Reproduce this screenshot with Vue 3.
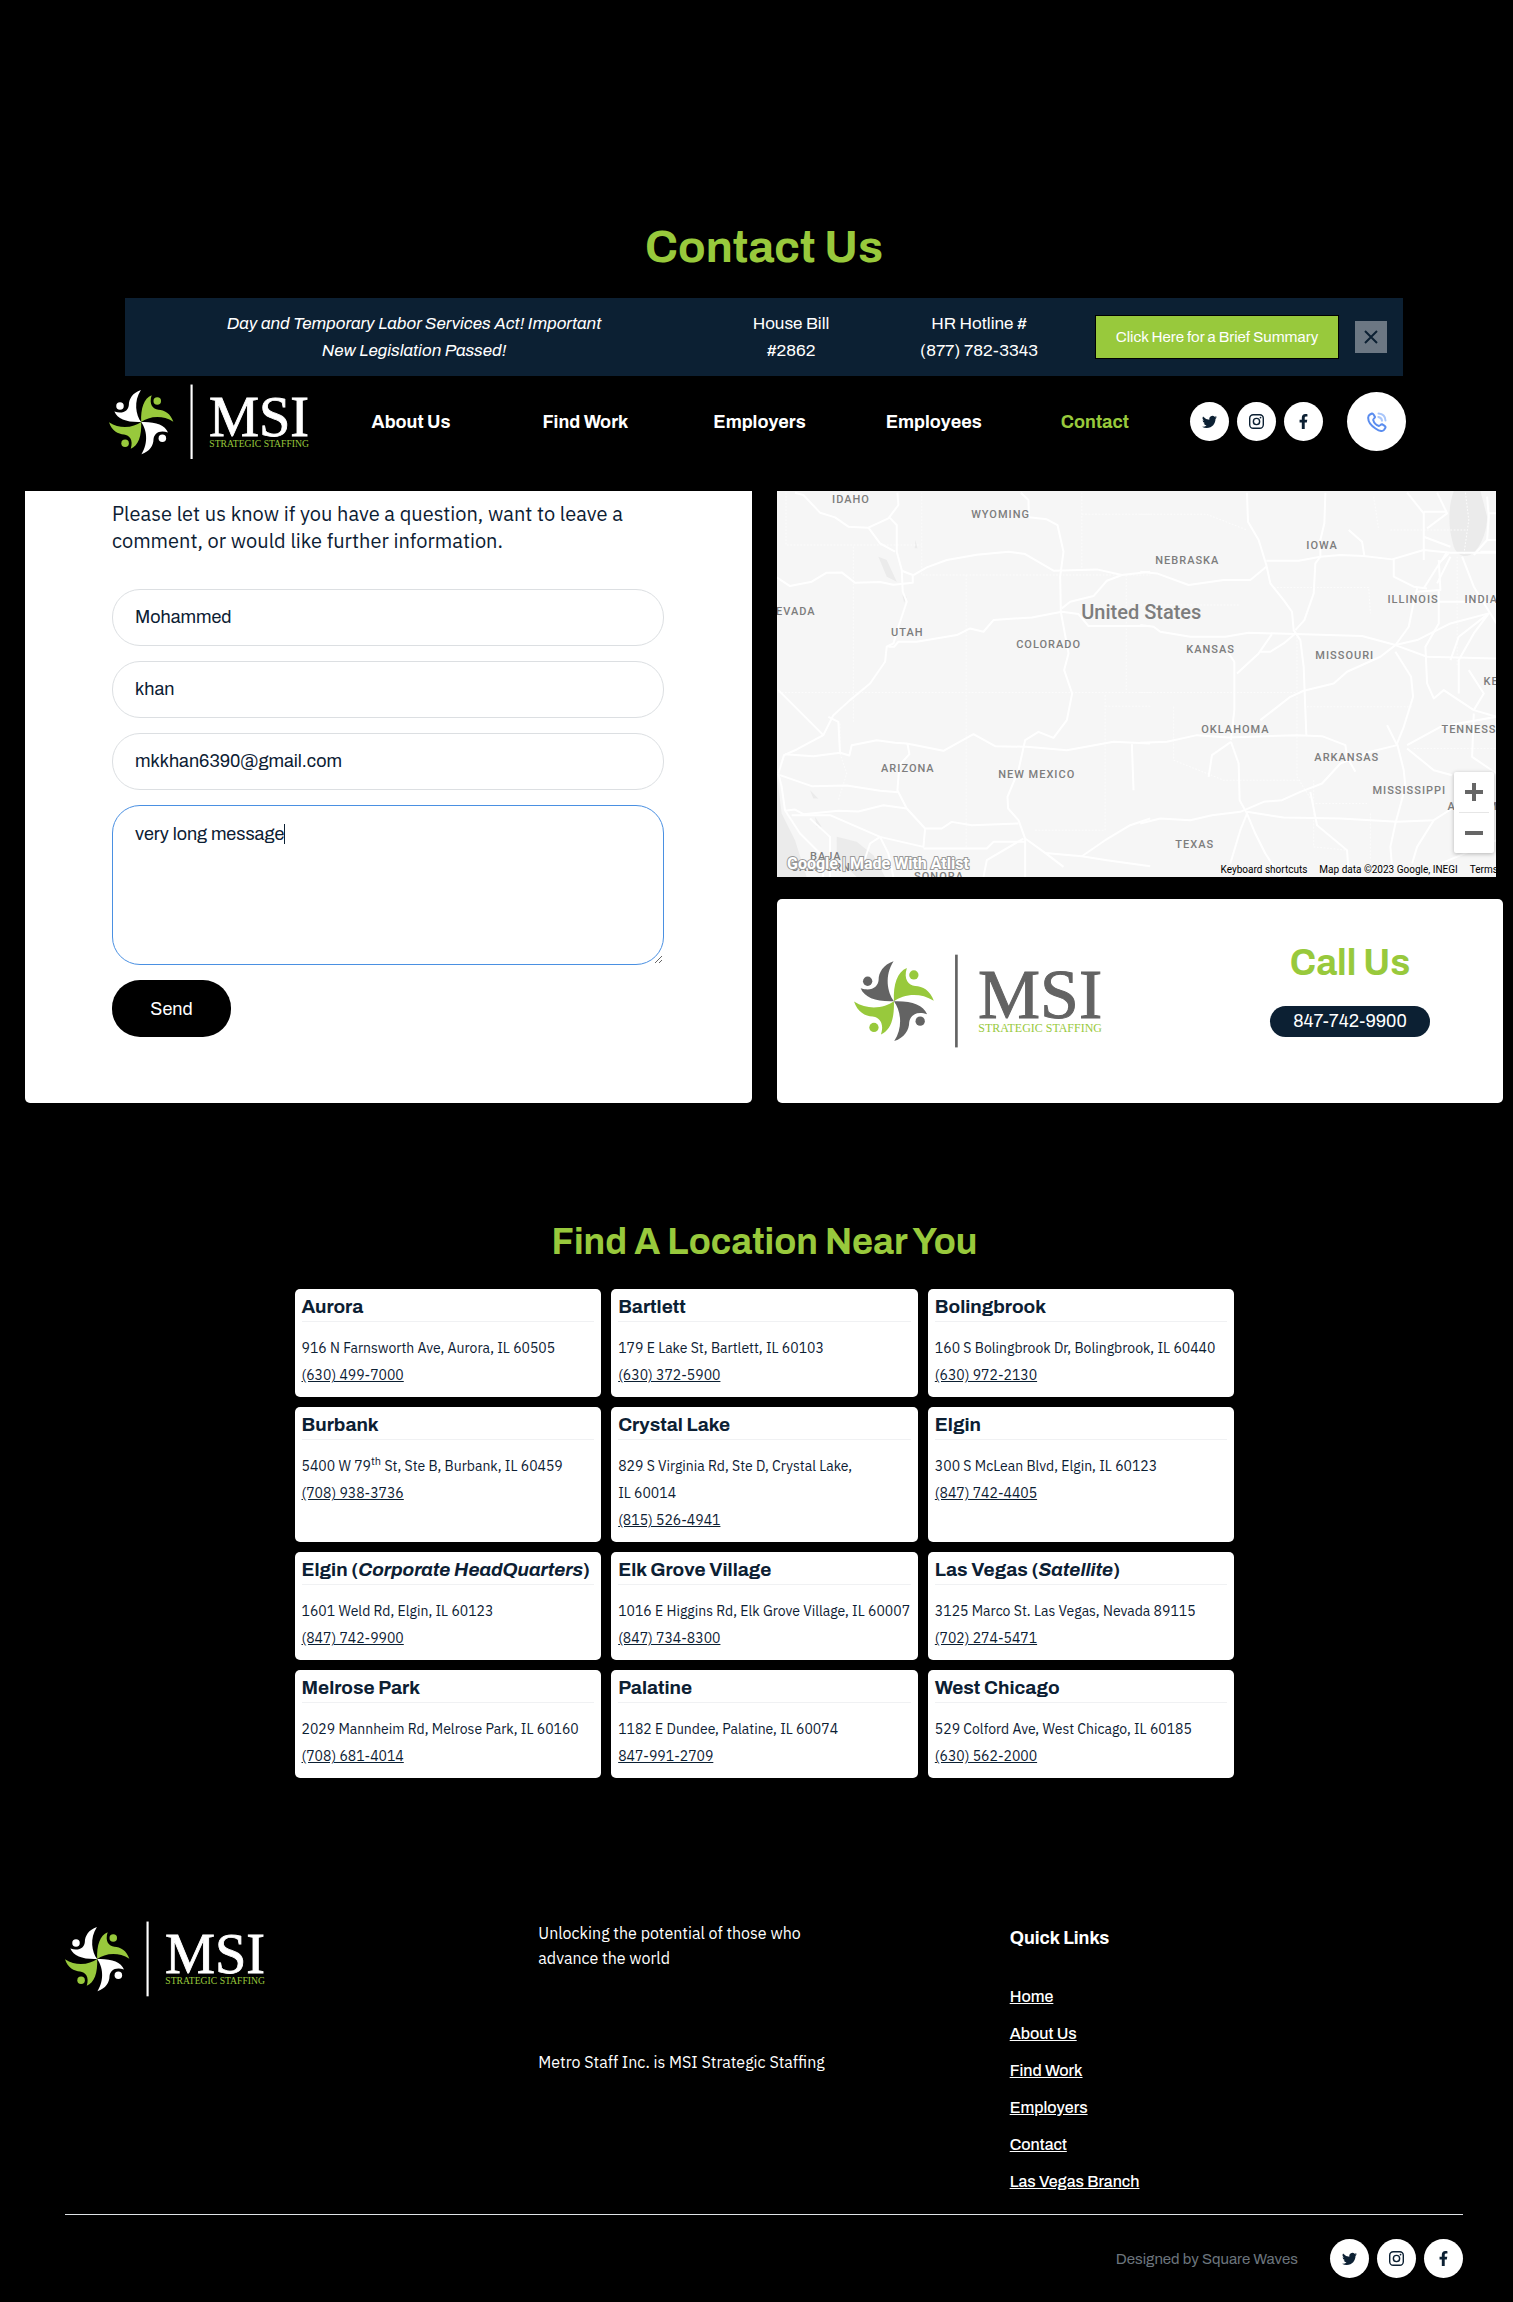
<script setup>
import { h, onMounted, ref } from 'vue'

const limb = 'M131 32 C100 42 86 66 86 88 C84 108 66 124 32 113 C44 142 80 154 132 152 C112 125 103 75 131 32Z'

const BrandLogo = () =>
  h('svg', { viewBox: '12 10 746 282', role: 'img', 'aria-label': 'MSI Strategic Staffing' }, [
    ...[0, 90, 180, 270].map((deg) =>
      h('g', { transform: `rotate(${deg} 132 152)`, fill: deg % 180 ? '#98c93c' : 'currentColor' }, [
        h('path', { d: limb }),
        h('circle', { cx: 53, cy: 92, r: 14 }),
      ]),
    ),
    h('rect', { x: 316, y: 12, width: 8, height: 279, fill: 'currentColor' }),
    h('text', { x: 385, y: 204, 'font-size': 210, fill: 'currentColor', stroke: 'currentColor', 'stroke-width': 3, 'font-family': '"Liberation Serif", serif' }, 'MSI'),
    h('text', { x: 386, y: 246, 'font-size': 36, fill: '#98c93c', 'font-family': '"Liberation Serif", serif' }, 'STRATEGIC STAFFING'),
  ])

const social = [
  {
    name: 'Twitter',
    d: 'M5.026 15c6.038 0 9.341-5.003 9.341-9.334 0-.14 0-.282-.006-.422A6.685 6.685 0 0 0 16 3.542a6.658 6.658 0 0 1-1.889.518 3.301 3.301 0 0 0 1.447-1.817 6.533 6.533 0 0 1-2.087.793A3.286 3.286 0 0 0 7.875 6.03a9.325 9.325 0 0 1-6.767-3.429 3.289 3.289 0 0 0 1.018 4.382A3.323 3.323 0 0 1 .64 6.575v.045a3.288 3.288 0 0 0 2.632 3.218 3.203 3.203 0 0 1-.865.115 3.23 3.23 0 0 1-.614-.057 3.283 3.283 0 0 0 3.067 2.277A6.588 6.588 0 0 1 .78 13.58a6.32 6.32 0 0 1-.78-.045A9.344 9.344 0 0 0 5.026 15z',
  },
  {
    name: 'Instagram',
    d: 'M4.5 0h7A4.5 4.5 0 0 1 16 4.5v7a4.5 4.5 0 0 1-4.500 4.500h-7A4.500 4.500 0 0 1 0 11.500v-7A4.500 4.500 0 0 1 4.500 0zM4.600 1.500A3.100 3.100 0 0 0 1.500 4.600v6.800a3.100 3.100 0 0 0 3.100 3.100h6.800a3.100 3.100 0 0 0 3.100-3.100V4.600a3.100 3.100 0 0 0-3.100-3.100zM8 3.900a4.100 4.100 0 1 1 0 8.200 4.100 4.100 0 0 1 0-8.200zM8 5.400a2.600 2.600 0 1 0 0 5.200 2.600 2.600 0 0 0 0-5.200zM12.300 2.800a.95.95 0 1 1 0 1.900.95.95 0 0 1 0-1.900z',
  },
  {
    name: 'Facebook',
    d: 'M6.200 16V9H3.800V6.200h2.400V4.100C6.200 1.600 7.600.1 10 .1c1.100 0 2.200.2 2.200.2v2.400H11c-1.200 0-1.700.7-1.700 1.500v2H12L11.500 9H9.300v7z',
  },
]

const nav = ['About Us', 'Find Work', 'Employers', 'Employees', 'Contact']
const links = ['Home', 'About Us', 'Find Work', 'Employers', 'Contact', 'Las Vegas Branch']

const locations = [
  { city: 'Aurora', address: '916 N Farnsworth Ave, Aurora, IL 60505', phone: '(630) 499-7000' },
  { city: 'Bartlett', address: '179 E Lake St, Bartlett, IL 60103', phone: '(630) 372-5900' },
  { city: 'Bolingbrook', address: '160 S Bolingbrook Dr, Bolingbrook, IL 60440', phone: '(630) 972-2130' },
  { city: 'Burbank', address: '5400 W 79', sup: 'th', rest: ' St, Ste B, Burbank, IL 60459', phone: '(708) 938-3736' },
  { city: 'Crystal Lake', address: '829 S Virginia Rd, Ste D, Crystal Lake,', second: 'IL 60014', phone: '(815) 526-4941' },
  { city: 'Elgin', address: '300 S McLean Blvd, Elgin, IL 60123', phone: '(847) 742-4405' },
  { city: 'Elgin', note: 'Corporate HeadQuarters', address: '1601 Weld Rd, Elgin, IL 60123', phone: '(847) 742-9900' },
  { city: 'Elk Grove Village', address: '1016 E Higgins Rd, Elk Grove Village, IL 60007', phone: '(847) 734-8300' },
  { city: 'Las Vegas', note: 'Satellite', address: '3125 Marco St. Las Vegas, Nevada 89115', phone: '(702) 274-5471' },
  { city: 'Melrose Park', address: '2029 Mannheim Rd, Melrose Park, IL 60160', phone: '(708) 681-4014' },
  { city: 'Palatine', address: '1182 E Dundee, Palatine, IL 60074', phone: '847-991-2709' },
  { city: 'West Chicago', address: '529 Colford Ave, West Chicago, IL 60185', phone: '(630) 562-2000' },
]

const westRoads = [
  'M75 38L100 45L150 98L195 112L235 140L295 143L355 115L385 75L382 38', 'M295 143L330 190L375 215', 'M358 112L380 135V215L395 270L398 335L410 365L385 440L370 490L350 500L345 545L300 610L240 660L190 705L160 765L80 808L42 825L25 880',
  'M20 292L60 318L125 305L170 278L215 277L255 308L330 306L370 314L428 308L428 285L395 272', 'M430 285L470 262L530 240L620 224L715 215L765 222L850 272L980 268L1055 285L1140 275',
  'M752 38L775 60L776 112L830 118L862 135L880 215L870 290L872 395L895 520L882 570L906 640L890 720L850 773L805 755L765 780L745 870L712 950L714 985L745 1020L765 1075L825 1118L935 1128L1010 1140L1140 1158',
  'M875 385L900 365L970 348L1010 302L1055 285', 'M355 500H372L385 485L440 485L560 465L600 445L640 455L670 420L785 412L875 395L925 402L955 438H1140',
  'M45 822L130 828L210 818L238 826L245 795L320 780L375 788L410 790L520 812L610 762L675 798L770 800L890 810L1030 785L1140 790',
  'M30 885L125 918L230 916L330 932L385 936', 'M412 790L418 822L388 855L382 930L410 985L465 1045H515L545 1025L605 1035L745 1030', 'M45 992L75 988L100 1002L205 992L265 994L340 975L410 985', 'M25 880L35 920L45 990L90 1060L150 1120L160 1190',
  'M65 1005L180 1005L330 1070L460 1100L465 1045', 'M330 1070L355 1120L370 1190M330 1070L300 1090L280 1150', 'M460 1105H650L670 1085H765', 'M935 1128L1005 1080L1080 1035L1140 1015', 'M1085 792L1090 930', 'M25 630L160 765M175 710L205 725L210 820', 'M760 1075L650 1140L640 1190M765 1075V1190M825 1118L880 1160', 'M120 1015L180 1070V1190',
]
const eastRoads = [
  'M320 38L323 125L355 180L378 255L390 310L430 360L455 395L460 450L480 480L490 560L495 690L498 765', 'M555 38L552 130L540 180L540 230', 'M378 242H475L540 230L600 225L670 228L755 238L850 210L930 218H1068', 'M0 275L50 280L145 315L250 300H330L378 260', 'M540 230L525 250L520 340L492 420L465 450', 'M625 150L665 185L672 228',
  'M0 435L40 440L60 455L150 470H255L325 458L465 462L665 468L765 495L860 530L1068 535', 'M465 460L430 490L390 515H360', 'M395 462L355 520L290 580', 'M265 520L282 545V690L272 780', 'M0 788L80 785L170 765L265 772L470 765L545 768L615 795L620 830L645 875',
  'M360 720L450 650L490 632L580 610L620 575L720 530L765 495L830 480L930 430L1045 400', 'M765 495L805 440L815 390L830 325M760 235V290L820 320L860 325', 'M850 325L900 245L925 220M830 335L900 330L895 240', 'M895 332V430L855 500L860 610L880 655L910 630L1000 690L1068 710', 'M765 515L812 590L818 650L790 740L770 790L790 870L795 920L765 1030L750 1100L755 1160',
  'M740 735L770 795L690 815L600 850L545 910L480 935L425 960L370 965L300 995L215 1005L150 1020L60 1015L0 1030', 'M800 795L900 740L1068 710M800 805L880 870L935 885', 'M272 785L295 850L298 960L320 1000L300 1050L270 1150M272 785L215 825L205 890', 'M320 1000L345 1060L375 1120L420 1190M320 995L430 1012L600 1015L770 1025L880 1020L935 985', 'M510 935L530 1035L620 1110L625 1180', 'M800 38L850 100V240M890 38L920 100L860 145M850 170L930 200M850 95H920', 'M930 230L890 310M965 230L1000 320L1068 430M1045 400L1000 460L955 540L955 640M1045 400L955 470L930 540M920 215L905 240',
  'M1000 690L1030 640L985 570M1000 700L995 830L1068 880M880 1020L830 1100L815 1150M900 1150L1068 1080', 'M1040 50L1045 110L1040 180L1000 225M1045 100H1068M1040 180H1068M1020 215H1068M895 365H1068',
]
const borders = {
  west: 'M48 38V195H455M455 38V285H1140M250 200V730M588 285V1105M25 637H1140M935 38V270M935 103H1140M1068 285V637M1005 645V1050H790M1005 678H1140M210 730V820L230 880L205 960',
  east: 'M0 103H200L320 150M0 375H300M400 322H685L690 400M0 637H470M500 680H820M100 680V840L250 900L480 900M470 470V890L520 970H680M750 150H980M950 230V560M700 50L715 150M520 900V1100L620 1110M690 1000V1180M820 805H1068',
}

// [name, x, baseline]
const labels = [
  ['IDAHO', 55, 12], ['WYOMING', 194, 27], ['NEBRASKA', 378, 73], ['IOWA', 529, 58], ['EVADA', -1, 124], ['UTAH', 114, 145],
  ['COLORADO', 239, 157], ['KANSAS', 409, 162], ['MISSOURI', 538, 168], ['ILLINOIS', 610, 112], ['INDIANA', 687, 112], ['KENTUCKY', 706, 194],
  ['OKLAHOMA', 424, 242], ['TENNESSEE', 664, 242], ['ARKANSAS', 537, 270], ['ARIZONA', 104, 281], ['NEW MEXICO', 221, 287], ['MISSISSIPPI', 595, 303],
  ['ALABAMA', 670, 319], ['TEXAS', 398, 357], ['BAJA', 33, 369], ['CALIFORNIA', 14, 380], ['SONORA', 137, 389],
]

const form = ref({ first: 'Mohammed', last: 'khan', email: 'mkkhan6390@gmail.com', message: 'very long message' })
const message = ref(null)
onMounted(() => message.value.focus())
</script>

<template>
  <div class="page">
    <h1>Contact Us</h1>

    <header>
      <aside class="notice">
        <em>Day and Temporary Labor Services Act! Important New Legislation Passed!</em>
        <span class="bill">House Bill #2862</span>
        <span class="hotline">HR Hotline # (877) 782-3343</span>
        <button class="summary" type="button">Click Here for a Brief Summary</button>
        <button class="close" type="button" aria-label="Close">
          <svg viewBox="0 0 14 14"><path d="M1 1L13 13M13 1L1 13" stroke="#0c2033" stroke-width="2" /></svg>
        </button>
      </aside>
      <div class="bar">
        <a class="brand" href="#"><BrandLogo /></a>
        <nav>
          <a v-for="item in nav" :key="item" href="#" :class="{ active: item === 'Contact' }">{{ item }}</a>
        </nav>
        <div class="social">
          <a v-for="s in social" :key="s.name" href="#" :aria-label="s.name">
            <svg viewBox="0 0 16 16"><path fill-rule="evenodd" :d="s.d" /></svg>
          </a>
        </div>
        <a class="phone" href="#" aria-label="Call">
          <svg viewBox="0 0 20 20" fill="none" stroke-width="2" stroke-linecap="round" stroke-linejoin="round">
            <path stroke="#5b8def" d="M3 2.500L5 1.500C6 1.200 6.500 2 8 5C8.200 6 6 6.800 6.200 8C7 10.800 9.400 13.300 12 14C13 14 13.800 12 15 12.200L18 14.200C19 15 18.500 16 17 17.800C15.500 19.500 12 19 8.500 16.500C4 13.500 1 9 1.200 5.500C1.300 4 2 3 3 2.500Z" />
            <path stroke="#a9c6fa" d="M11.500 1.500C15.500 1.800 18.300 4.500 18.500 8.500M11.300 5C13.300 5.300 14.800 6.700 15 8.700" />
          </svg>
        </a>
      </div>
    </header>

    <main>
      <section class="contact">
        <form class="card" @submit.prevent>
          <p>Please let us know if you have a question, want to leave a comment, or would like further information.</p>
          <input v-model="form.first" type="text" aria-label="First name" />
          <input v-model="form.last" type="text" aria-label="Last name" />
          <input v-model="form.email" type="email" aria-label="Email" />
          <div class="message">
            <textarea ref="message" v-model="form.message" aria-label="Message"></textarea>
            <span class="caret"></span>
          </div>
          <button type="submit">Send</button>
        </form>

        <div class="side">
          <div class="map">
            <svg class="tiles" viewBox="0 0 719 386" preserveAspectRatio="xMinYMin slice">
              <g class="land" transform="translate(-7 -11) scale(.3333)">
                <path class="water" d="M20 880L35 1000L75 1080L110 1190H20ZM200 1070L260 1085L310 1125L345 1190H260L200 1130ZM325 230L350 240L380 305L350 290ZM120 930L145 955L130 955ZM135 1010L155 1040L140 1040ZM397 345L410 350L402 368ZM436 180L442 205H434Z" />
                <path class="border" :d="borders.west" />
                <path v-for="(d, i) in westRoads" :key="i" class="road" :d="d" />
              </g>
              <g class="land" transform="translate(363 -11) scale(.3333)">
                <path class="water" d="M940 33C920 90 925 150 940 200C955 235 985 235 1005 212C1025 190 1040 150 1040 110L1020 33Z" />
                <path class="border" :d="borders.east" />
                <path class="border" d="M975 38L985 120L970 225" />
                <path v-for="(d, i) in eastRoads" :key="i" class="road" :d="d" />
              </g>
              <g class="states">
                <text v-for="l in labels" :key="l[0]" :x="l[1]" :y="l[2]">{{ l[0] }}</text>
              </g>
              <text class="country" x="304" y="128">United States</text>
              <text class="mark" x="10" y="378">Google | Made With Atlist</text>
            </svg>
            <div class="zoom">
              <button type="button" aria-label="Zoom in"><svg viewBox="0 0 18 18"><path d="M7 0h4v7h7v4h-7v7H7v-7H0V7h7z" /></svg></button>
              <button type="button" aria-label="Zoom out"><svg viewBox="0 0 18 18"><path d="M0 7h18v4H0z" /></svg></button>
            </div>
            <div class="credits">
              <span>Keyboard shortcuts</span><span>Map data ©2023 Google, INEGI</span><a href="#">Terms of Use</a>
            </div>
          </div>
          <div class="call">
            <BrandLogo class="call-logo" />
            <div class="call-text">
              <h2>Call Us</h2>
              <a href="tel:8477429900">847-742-9900</a>
            </div>
          </div>
        </div>
      </section>

      <section class="locations">
        <h2>Find A Location Near You</h2>
        <div class="grid">
          <article v-for="l in locations" :key="l.phone">
            <h3>{{ l.city }}<template v-if="l.note"> (<em>{{ l.note }}</em>)</template></h3>
            <p>
              {{ l.address }}<template v-if="l.sup"><sup>{{ l.sup }}</sup>{{ l.rest }}</template>
              <template v-if="l.second"><br />{{ l.second }}</template>
              <br /><a href="#">{{ l.phone }}</a>
            </p>
          </article>
        </div>
      </section>
    </main>

    <footer>
      <div class="columns">
        <div class="brand"><BrandLogo /></div>
        <div class="about">
          <p>Unlocking the potential of those who advance the world</p>
          <p>Metro Staff Inc. is MSI Strategic Staffing</p>
        </div>
        <div class="quick">
          <h4>Quick Links</h4>
          <ul>
            <li v-for="item in links" :key="item"><a href="#">{{ item }}</a></li>
          </ul>
        </div>
      </div>
      <div class="base">
        <span>Designed by Square Waves</span>
        <div class="social">
          <a v-for="s in social" :key="s.name" href="#" :aria-label="s.name">
            <svg viewBox="0 0 16 16"><path fill-rule="evenodd" :d="s.d" /></svg>
          </a>
        </div>
      </div>
    </footer>
  </div>
</template>

<style>
body {
  margin: 0;
  background: #000;
}
</style>

<style scoped>
* {
  box-sizing: border-box;
}
.page {
  background: #000;
  color: #fff;
  font-family: Archivo, 'Liberation Sans', sans-serif;
  padding-bottom: 24px;
}
h1, h2, h3, h4, p, ul {
  margin: 0;
  padding: 0;
}
a {
  color: inherit;
}
button, input, textarea {
  font-family: inherit;
}
svg {
  display: block;
}
h1, h2 {
  color: #98c93c;
}
h1 {
  padding: 220px 0 24px 15px;
  font-size: 45px;
  line-height: 54px;
  text-align: center;
}
.notice {
  display: flex;
  align-items: center;
  height: 78px;
  margin: 0 110px 0 125px;
  background: #0c2033;
  font-size: 17px;
  line-height: 27px;
  text-align: center;
}
.notice em {
  width: 390px;
  margin-left: 94px;
}
.bill {
  width: 80px;
  margin-left: 142px;
}
.hotline {
  width: 124px;
  margin-left: 86px;
}
.summary {
  flex: none;
  width: 244px;
  height: 44px;
  margin-left: 54px;
  padding: 0;
  border: 1px solid #000;
  background: #98c93c;
  color: #fff;
  font-size: 15px;
}
.close {
  display: grid;
  place-items: center;
  width: 32px;
  height: 32px;
  margin-left: 16px;
  padding: 0;
  border: 0;
  background: #6c7783;
}
.close svg {
  width: 14px;
}
.bar {
  display: flex;
  align-items: center;
  height: 115px;
  padding: 0 107px 24px 109px;
}
.brand svg {
  width: 200px;
}
nav {
  flex: 1;
  display: grid;
  grid-template-columns: 174fr 174fr 174fr 174fr 148fr;
  margin: 0 21px 0 15px;
  font-size: 18px;
  font-weight: 700;
  text-align: center;
}
nav a {
  text-decoration: none;
}
nav .active {
  color: #98c93c;
}
.social {
  display: flex;
  gap: 8px;
}
.social a, .phone {
  display: grid;
  place-items: center;
  width: 39px;
  height: 39px;
  border-radius: 50%;
  background: #fff;
}
.social svg {
  width: 15px;
  fill: #0c2033;
}
.phone {
  width: 59px;
  height: 59px;
  margin-left: 24px;
}
.phone svg {
  width: 20px;
}
.contact {
  display: grid;
  grid-template-columns: 1fr 1fr;
  gap: 25px;
  padding: 0 10px 0 25px;
}
.card {
  display: flex;
  flex-direction: column;
  gap: 15px;
  padding: 9px 88px 65px 87px;
  border-radius: 0 0 5px 5px;
  background: #fff;
  color: #0c2033;
}
.card p {
  margin-bottom: 20px;
  font-family: 'IBM Plex Sans', Roboto, sans-serif;
  font-size: 20px;
  line-height: 27px;
}
.card input, .card textarea {
  display: block;
  width: 100%;
  height: 57px;
  padding: 0 22px 2px;
  border: 1px solid #dcdfe2;
  border-radius: 28px;
  background: #fff;
  color: #0c2033;
  font-size: 18px;
  outline: none;
}
.card textarea {
  height: 160px;
  padding-top: 17px;
  line-height: 22px;
}
.card textarea:focus {
  border-color: #4a90e2;
}
.message {
  position: relative;
}
.caret {
  position: absolute;
  top: 19px;
  left: 172px;
  width: 1px;
  height: 20px;
  background: #0c2033;
}
.card button {
  align-self: flex-start;
  width: 119px;
  height: 57px;
  border: 0;
  border-radius: 28px;
  background: #000;
  color: #fff;
  font-size: 18px;
}
.side {
  display: flex;
  flex-direction: column;
  gap: 22px;
}
.map {
  position: relative;
  margin-right: 7px;
  overflow: hidden;
  background: #f6f6f6;
}
.tiles {
  width: 100%;
  height: 386px;
  font-family: Roboto, sans-serif;
}
.water {
  fill: #ebebeb;
}
.road, .border {
  fill: none;
  stroke: #fff;
  stroke-width: 6;
  stroke-linejoin: round;
}
.border {
  stroke: #fcfcfc;
  stroke-width: 3;
  stroke-dasharray: 5 5;
}
.states {
  fill: #7d7d7d;
  font-size: 11px;
  font-weight: 500;
  letter-spacing: 1px;
}
.country {
  fill: #7d7d7d;
  font-size: 20px;
  font-weight: 500;
}
.mark {
  fill: #fff;
  stroke: #999;
  stroke-width: 2;
  paint-order: stroke;
  font-size: 16px;
  font-weight: 700;
}
.zoom {
  position: absolute;
  right: 2px;
  bottom: 24px;
  display: flex;
  flex-direction: column;
  width: 40px;
  padding: 0 5px;
  border-radius: 2px;
  background: #fff;
  box-shadow: 0 1px 4px #0004;
}
.zoom button {
  display: grid;
  place-items: center;
  height: 40px;
  padding: 0;
  border: 0;
  background: none;
}
.zoom button + button {
  height: 41px;
  border-top: 1px solid #e6e6e6;
}
.zoom svg {
  width: 18px;
  fill: #666;
}
.credits {
  position: absolute;
  right: -33px;
  bottom: 0;
  display: flex;
  gap: 12px;
  color: #000;
  font: 10px/14px Roboto, sans-serif;
  white-space: nowrap;
}
.credits a {
  text-decoration: none;
}
.call {
  flex: 1;
  display: flex;
  align-items: center;
  justify-content: space-between;
  min-height: 204px;
  padding: 0 73px 0 77px;
  border-radius: 5px;
  background: #fff;
}
.call-logo {
  width: 248px;
  color: #636363;
}
.call-text {
  display: flex;
  flex-direction: column;
  align-items: center;
  gap: 20px;
  padding-bottom: 24px;
}
.call-text h2 {
  font-size: 36px;
  line-height: 45px;
}
.call-text a {
  width: 160px;
  border-radius: 16px;
  background: #0c2033;
  font-size: 18px;
  line-height: 31px;
  text-align: center;
  text-decoration: none;
}
.locations {
  max-width: 955px;
  margin: 0 auto;
  padding: 117px 0 143px 15px;
}
.contact + .locations {
  margin-right: calc(50% - 478px);
}
.locations h2 {
  font-size: 36px;
  line-height: 45px;
  text-align: center;
}
.grid {
  display: grid;
  grid-template-columns: repeat(3, 1fr);
  gap: 10px;
  margin-top: 24px;
}
article {
  min-height: 108px;
  padding: 5px 7px 8px;
  border-radius: 5px;
  background: #fff;
  color: #0c2033;
}
article h3 {
  padding-bottom: 2px;
  border-bottom: 1px solid #f0f1f3;
  font-size: 19px;
  line-height: 25px;
  white-space: nowrap;
}
article p {
  margin-top: 13px;
  font-family: 'IBM Plex Sans', Roboto, sans-serif;
  font-size: 14px;
  line-height: 27px;
  white-space: nowrap;
}
sup {
  font-size: 11px;
  line-height: 0;
}
footer {
  padding: 0 50px 0 65px;
}
.columns {
  display: grid;
  grid-template-columns: 1fr 1fr 1fr;
  gap: 16px;
  border-bottom: 1px solid #dee2e6;
}
.about {
  padding-left: 2px;
  font-family: 'IBM Plex Sans', Roboto, sans-serif;
  font-size: 16px;
  line-height: 25px;
}
.about p {
  max-width: 300px;
  margin-bottom: 79px;
}
.quick {
  padding: 0 0 19px 2px;
}
.quick h4 {
  margin-bottom: 28px;
  font-size: 18px;
  line-height: 34px;
}
.quick ul {
  display: grid;
  gap: 10px;
  list-style: none;
  font-size: 16px;
  font-weight: 500;
  line-height: 27px;
}
.base {
  display: flex;
  align-items: center;
  justify-content: flex-end;
  gap: 32px;
  padding-top: 24px;
  color: #6c757d;
  font-size: 15px;
}
</style>
